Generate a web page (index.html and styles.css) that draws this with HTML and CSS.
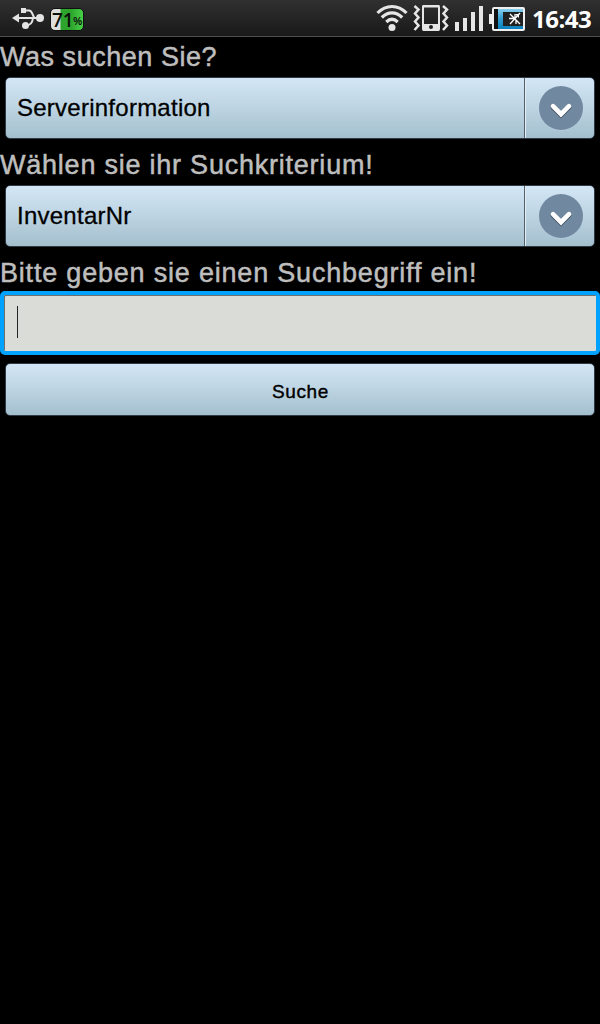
FILE: index.html
```html
<!DOCTYPE html>
<html lang="de">
<head>
<meta charset="utf-8">
<title>Suche</title>
<link rel="stylesheet" href="styles.css">
</head>
<body>
<header class="status">
  <svg class="usb" width="34" height="24" viewBox="0 0 34 24" fill="none" stroke="#e4e4e4" stroke-width="2">
    <path d="M6 12H29M13 4.500H17C20.500 4.500 20 9 22.500 12M14 19.500C19 19.500 20.500 16 21 12"/>
    <g fill="#e4e4e4" stroke="none"><path d="M0 12L7 7.500V16.500Z"/><circle cx="28" cy="12" r="4"/><rect x="9" y="2" width="5" height="5"/><circle cx="13.500" cy="19.500" r="3.500"/></g>
  </svg>
  <div class="charge"><span class="level">71</span><span class="percent">%</span></div>
  <svg class="wifi" width="32" height="28" viewBox="0 0 32 28" fill="none" stroke="#e6e6e6" stroke-width="3.200">
    <path d="M1.500 9C10 .300 22 .300 30.500 9M5.800 13.500C12 7.300 20 7.300 26.200 13.500M10.300 18C14 14.500 18 14.500 21.700 18"/>
    <circle cx="16" cy="23.500" r="3.500" fill="#e6e6e6" stroke="none"/>
  </svg>
  <svg class="vibrate" width="36" height="28" viewBox="0 0 36 28">
    <path d="M10 1H26Q27 1 27 3V25Q27 27 25.500 27H10.500Q9 27 9 25V3Q9 1 10 1ZM11 3.500V20H25V3.500ZM18 21A2 2 0 1 0 18 25A2 2 0 1 0 18 21Z" fill="#e6e6e6" fill-rule="evenodd"/>
    <path d="M1.500 2L5.500 5.500L2 9.500L5.500 13.500L2 17.500L5.500 21.500L1.500 26M30 2L34 5.500L30.500 9.500L34 13.500L30.500 17.500L34 21.500L30 26" fill="none" stroke="#e6e6e6" stroke-width="2.500"/>
  </svg>
  <svg class="signal" width="29" height="26" viewBox="0 0 29 26" fill="#e6e6e6"><path d="M0 17H4V26H0ZM8 13H12V26H8ZM16 7H20V26H16ZM24 1H28V26H24Z"/></svg>
  <svg class="battery" width="37" height="26" viewBox="0 0 37 26">
    <defs><linearGradient id="fill" x2="0" y2="1"><stop stop-color="#8ad0ee"/><stop offset=".45" stop-color="#359fd1"/><stop offset="1" stop-color="#087fbd"/></linearGradient></defs>
    <path d="M0 8H3V3Q3 1 5 1H34Q36 1 36 3V23Q36 25 34 25H5Q3 25 3 23V18H0Z" fill="#eee"/>
    <path d="M5 3H34V23H5Z" fill="#111"/><path d="M9 3H34V23H9Z" fill="url(#fill)"/>
    <path d="M14 6H34V20H14Z" fill="#202020"/>
    <path d="M21 8L31 18M31 7L21 18M26 8V12M20 12.500H25M27 14V18" stroke="#fff" stroke-width="1.300"/>
    <path d="M26 8H30V12Z" fill="#fff"/>
  </svg>
  <time class="clock">16:43</time>
</header>
<main class="form">
  <div class="label label-what">Was suchen Sie?</div>
  <div class="spinner" role="button">
    <span class="value">Serverinformation</span>
    <span class="drop"><svg class="arrow" width="46" height="46" viewBox="0 0 46 46"><circle cx="23" cy="23.800" r="22" fill="#b3cad9"/><circle cx="23" cy="23" r="22" fill="#7189a0"/><path d="M15 22.200L23 30.200L31 22.200" fill="none" stroke="#405061" stroke-width="4.800" stroke-linecap="round"/><path d="M15 21.200L23 29.200L31 21.200" fill="none" stroke="#fff" stroke-width="4.600" stroke-linecap="round"/></svg></span>
  </div>
  <div class="label label-by">Wählen sie ihr Suchkriterium!</div>
  <div class="spinner" role="button">
    <span class="value">InventarNr</span>
    <span class="drop"><svg class="arrow" width="46" height="46" viewBox="0 0 46 46"><circle cx="23" cy="23.800" r="22" fill="#b3cad9"/><circle cx="23" cy="23" r="22" fill="#7189a0"/><path d="M15 22.200L23 30.200L31 22.200" fill="none" stroke="#405061" stroke-width="4.800" stroke-linecap="round"/><path d="M15 21.200L23 29.200L31 21.200" fill="none" stroke="#fff" stroke-width="4.600" stroke-linecap="round"/></svg></span>
  </div>
  <div class="label label-term">Bitte geben sie einen Suchbegriff ein!</div>
  <div class="field"><span class="caret"></span></div>
  <div class="submit" role="button">Suche</div>
</main>
</body>
</html>
```
FILE: styles.css
```css
* { box-sizing: border-box; }
body { margin: 0; min-height: 1024px; background: #000; font-family: "Liberation Sans", Arial, sans-serif; }
.status { display: flex; height: 37px; align-items: flex-start; background: linear-gradient(#303030, #191919); border-bottom: 1px solid #505050; }
.status svg { display: block; flex: none; }
.usb { margin: 6px 0 0 12px; }
.charge { display: flex; align-items: center; width: 34px; height: 23px; margin: 8px 0 0 4px; padding-left: 1px; border-radius: 5px; background: linear-gradient(90deg, #ddd 0 9px, #2da52d 10px 20px, #48d048); border: 1px solid #111; color: #0b0f0b; font-weight: bold; }
.level { font: 600 19px/20px "Open Sans", sans-serif; letter-spacing: -.2px; }
.percent { font-size: 10px; padding-top: 4px; }
.wifi { margin: 4px 0 0 auto; }
.vibrate { margin: 4px 0 0 5px; }
.signal { margin: 5px 0 0 6px; }
.battery { margin: 6px 0 0 5px; }
.clock { width: 68px; margin-left: 6px; color: #fff; font: bold 24px/37px "Open Sans", sans-serif; letter-spacing: -.5px; }
.form { display: flex; flex-direction: column; }
.label { height: 40px; color: #bebebe; font-size: 27px; line-height: 40px; white-space: nowrap; -webkit-text-stroke: .5px #bebebe; }
.label-what { letter-spacing: .53px; }
.label-by { letter-spacing: .77px; }
.label-term { height: 38px; letter-spacing: .8px; }
.spinner { display: flex; flex: none; height: 62px; margin: 0 5px 6px; border: 1px solid #303a44; border-radius: 5px; background: linear-gradient(#d3e6f6, #bdd4e2 50%, #a3bfce); }
.value { flex: 1; padding-left: 11px; color: #000; font-size: 24px; line-height: 60px; letter-spacing: .25px; -webkit-text-stroke: .3px #000; }
.drop { display: flex; width: 70px; padding-left: 2px; align-items: center; justify-content: center; border-left: 1px solid #53606b; box-shadow: inset 1px 0 #e3edf3; }
.field { display: flex; height: 64px; padding: 11px 0 0 13px; border: 4px solid #00a2ff; border-radius: 5px; background: #dadcd8; box-shadow: inset 1px 1px #6f6f70; }
.caret { width: 1px; height: 32px; background: #222; }
.submit { height: 53px; margin: 8px 5px 0; border: 1px solid #303a44; border-radius: 5px; background: linear-gradient(#d3e6f6, #bdd4e2 50%, #a3bfce); color: #000; text-align: center; font-size: 19px; line-height: 55px; letter-spacing: .6px; text-indent: 1px; -webkit-text-stroke: .4px #000; }
```
